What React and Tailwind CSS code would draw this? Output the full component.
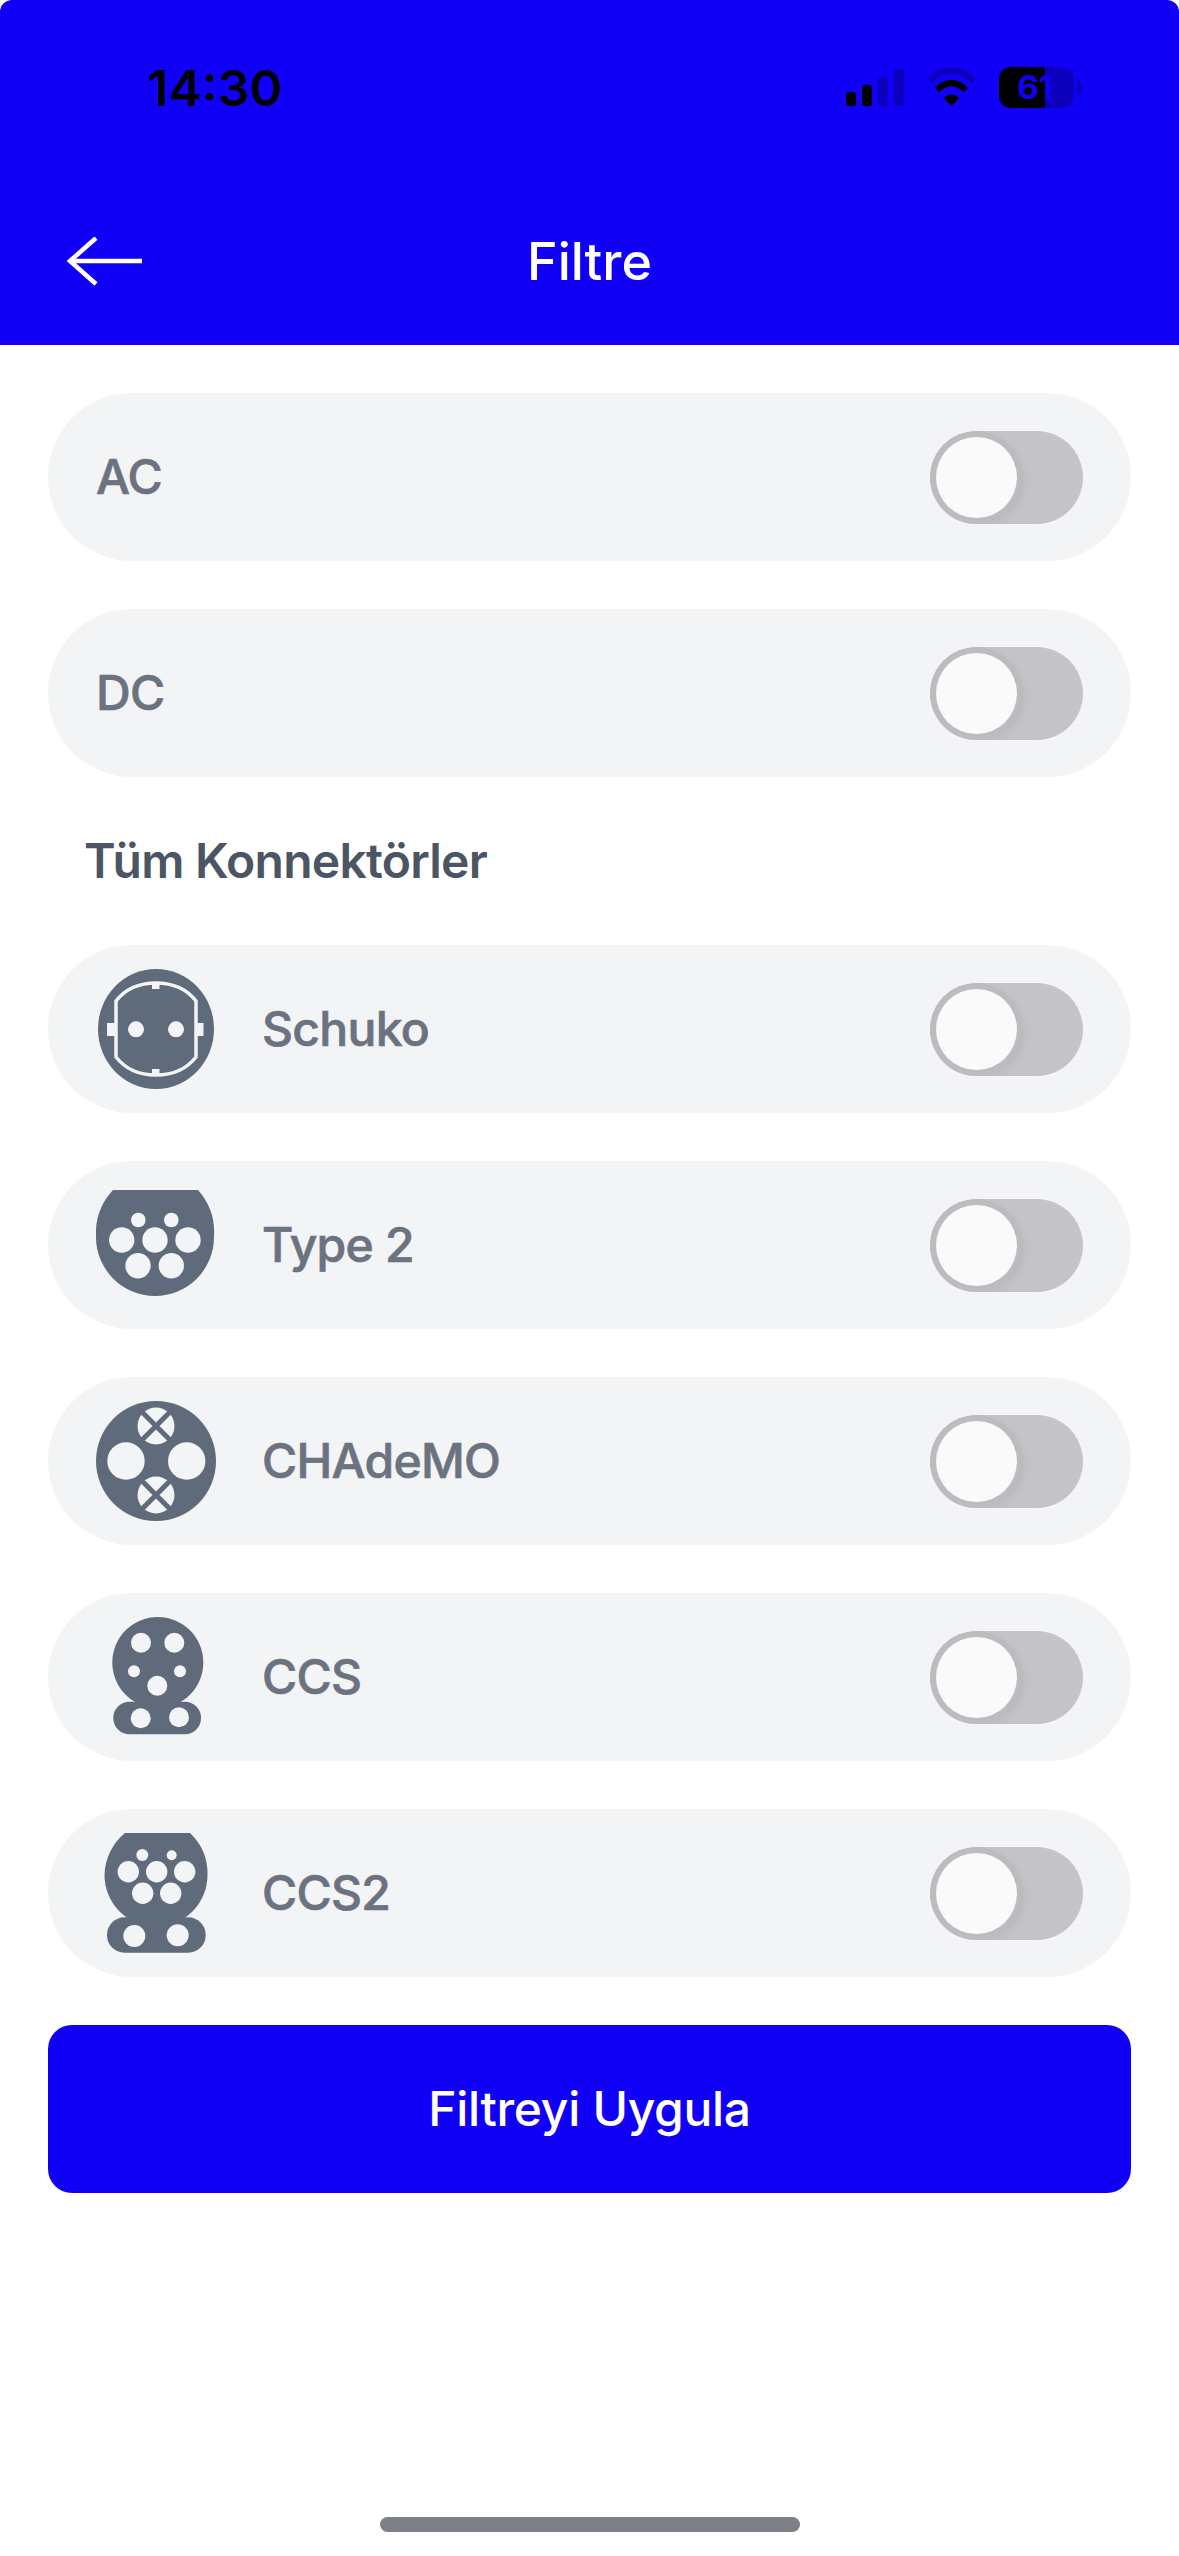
import { useState } from "react";

const BLUE = "#1000f5";
const DIM = "#0c00bd";
const INK = "#5f6b7b";
const BG = "#f3f4f6";

function Holes({ items }) {
  return items.map(([cx, cy, r]) => <circle key={`${cx}-${cy}`} cx={cx} cy={cy} r={r} fill={BG} />);
}

function SchukoIcon() {
  return (
    <svg width="120" height="120" viewBox="0 0 120 120">
      <ellipse cx="60" cy="60" rx="58" ry="60" fill={INK} />
      <path d="M20 32 Q34 14 60 14 Q86 14 100 32 L100 88 Q86 106 60 106 Q34 106 20 88 Z" fill="none" stroke={BG} strokeWidth="3.500" />
      <rect x="56" y="13" width="7.500" height="7" fill={BG} />
      <rect x="56" y="100" width="7.500" height="7" fill={BG} />
      <rect x="11" y="54" width="9" height="13" fill={BG} />
      <rect x="100" y="54" width="7.500" height="13" fill={BG} />
      <Holes items={[[40, 60.3, 8], [80, 60.3, 8]]} />
    </svg>
  );
}

function Type2Icon() {
  return (
    <svg width="120" height="120" viewBox="0 0 120 120">
      <path d="M17 5 H102 A64 64 0 0 1 118 52 A59 59 0 0 1 0 52 A64 64 0 0 1 17 5 Z" fill={INK} />
      <Holes items={[[42.3, 35, 7.3], [75.3, 35, 7.3], [25.7, 55, 12.7], [59, 55, 12.7], [92, 55, 12.7], [42, 80.7, 12.7], [75.3, 80.7, 12.7]]} />
    </svg>
  );
}

function ChademoIcon() {
  return (
    <svg width="120" height="120" viewBox="0 0 120 120">
      <circle cx="60" cy="60" r="60" fill={INK} />
      <Holes items={[[30, 60, 18.7], [90.7, 60, 18.7], [60, 25, 18.5], [60, 94, 18.5]]} />
      <path d="M46 11 L74 39 M74 11 L46 39 M46 80 L74 108 M74 80 L46 108" stroke={INK} strokeWidth="5" />
    </svg>
  );
}

function CcsIcon() {
  return (
    <svg width="120" height="120" viewBox="0 0 120 120">
      <circle cx="61.8" cy="45.5" r="45.5" fill={INK} />
      <rect x="17.3" y="84.7" width="87.7" height="32.6" rx="16" fill={INK} />
      <Holes items={[[45, 25.7, 10], [78.3, 25.7, 10], [38, 54.3, 6], [84, 54.3, 6], [61.3, 68.7, 10], [44.7, 101.3, 10], [83, 100.3, 10]]} />
    </svg>
  );
}

function Ccs2Icon() {
  return (
    <svg width="120" height="120" viewBox="0 0 120 120">
      <path d="M29 0 H94 A56 56 0 0 1 111.500 42 A51.500 51.500 0 0 1 8.500 42 A56 56 0 0 1 29 0 Z" fill={INK} />
      <rect x="11" y="84.3" width="98.7" height="35.4" rx="17.5" fill={INK} />
      <Holes items={[[46.3, 22, 6], [75.7, 22.3, 5], [32.3, 38.7, 10.7], [60.7, 38.7, 10.7], [88.7, 38.7, 10.7], [46.7, 60.3, 10.7], [74.7, 60.3, 10.7], [38.3, 103, 11], [81.7, 102.3, 11]]} />
    </svg>
  );
}

function StatusIcons() {
  return (
    <div className="flex items-start gap-[23px] pr-[97px]">
      <svg width="58" height="41" viewBox="0 0 58 41">
        <rect x="0" y="25" width="10" height="14" rx="3" fill="#000" />
        <rect x="16" y="18" width="10" height="21" rx="3" fill="#000" />
        <rect x="32" y="10" width="10" height="29" rx="3" fill={DIM} />
        <rect x="48" y="2" width="10" height="37" rx="3" fill={DIM} />
      </svg>
      <svg width="49" height="41" viewBox="0 0 49 41">
        <path d="M2 14 Q24.500 -7 47 14" fill="none" stroke={DIM} strokeWidth="6" />
        <path d="M10 23 Q24.500 9 39 23" fill="none" stroke="#000" strokeWidth="6" />
        <path d="M16.500 31 Q24.500 24 32.500 31 L24.500 39 Z" fill="#000" />
      </svg>
      <svg width="83" height="41" viewBox="0 0 83 41">
        <rect x="0" y="0" width="75" height="41" rx="12" fill={DIM} />
        <path d="M12 0 H46 V41 H12 A12 12 0 0 1 0 29 V12 A12 12 0 0 1 12 0 Z" fill="#000" />
        <path d="M78 12 Q83 16 83 20 Q83 24 78 28 Z" fill={DIM} />
        <text x="36" y="32" textAnchor="middle" fontFamily="Inter, sans-serif" fontWeight="700" fontSize="33" fill={BLUE}>61</text>
      </svg>
    </div>
  );
}

function Toggle() {
  const [on, setOn] = useState(false);
  return (
    <button
      type="button"
      onClick={() => setOn(!on)}
      className={`flex h-[93px] w-[153px] items-center overflow-hidden rounded-full p-[6px] ${on ? "justify-end bg-[#1000f5]" : "justify-start bg-[#c4c4c7]"}`}
    >
      <span className="block h-[81px] w-[81px] rounded-full bg-[#fafafa] shadow-[0_0_0_6px_#bcbcc0,4px_4px_7px_2px_rgba(165,165,170,0.45)]" />
    </button>
  );
}

function Row({ icon, label }) {
  return (
    <div className="flex h-[168px] items-center justify-between rounded-[84px] bg-[#f3f4f6] px-[48px]">
      <div className="flex items-center">
        {icon && <div className="mr-[46px] w-[120px] shrink-0">{icon}</div>}
        <span className="text-[48px] font-medium leading-none tracking-[-0.7px] text-[#6b7280] [-webkit-text-stroke:0.7px_#6b7280]">{label}</span>
      </div>
      <Toggle />
    </div>
  );
}

export default function App() {
  return (
    <div className="flex h-[2556px] flex-col overflow-hidden bg-white font-['Inter',sans-serif]">
      <header className="h-[345px] shrink-0 rounded-t-[12px] bg-[#1000f5]">
        <div className="flex h-[41px] translate-y-[67px] items-center justify-between">
          <span className="pl-[147px] text-[50px] font-semibold leading-none text-black">14:30</span>
          <StatusIcons />
        </div>
        <div className="mt-[185px] grid h-[72px] grid-cols-[1fr_auto_1fr] items-center">
          <div className="pl-[66px]">
            <svg width="78" height="50" viewBox="0 0 78 50" fill="none" stroke="#fff" strokeWidth="4.500">
              <path d="M76 24 H4" />
              <path d="M30 1 L4 24 L30 47" />
            </svg>
          </div>
          <h1 className="text-[52px] font-medium leading-none text-white">Filtre</h1>
        </div>
      </header>

      <main className="flex flex-col gap-[48px] px-[48px] pt-[48px]">
        <Row label="AC" />
        <Row label="DC" />
        <h2 className="flex h-[72px] items-center pl-[36px] text-[48px] font-semibold leading-none tracking-[-0.75px] text-[#4b5563]">Tüm Konnektörler</h2>
        <Row icon={<SchukoIcon />} label="Schuko" />
        <Row icon={<Type2Icon />} label="Type 2" />
        <Row icon={<ChademoIcon />} label="CHAdeMO" />
        <Row icon={<CcsIcon />} label="CCS" />
        <Row icon={<Ccs2Icon />} label="CCS2" />
        <button type="button" className="h-[168px] rounded-[24px] bg-[#1000f5] text-[48px] font-medium tracking-[-0.3px] text-white">
          Filtreyi Uygula
        </button>
      </main>

      <div className="mb-[24px] mt-auto h-[15px] w-[420px] self-center rounded-full bg-[#7d8086]" />
    </div>
  );
}
